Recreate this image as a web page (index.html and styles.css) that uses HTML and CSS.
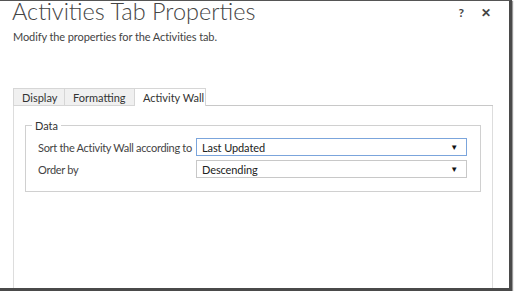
FILE: index.html
```html
<!DOCTYPE html>
<html lang="en">
  <head>
    <meta charset="UTF-8" />
    <meta name="viewport" content="width=device-width, initial-scale=1.0" />
    <title>Activities Tab Properties</title>
    <link rel="stylesheet" href="styles.css">
  </head>
  <body>
    <div class="dialog">
      <div class="header">
        <h1 class="title">Activities Tab Properties</h1>
        <div class="actions">
          <span class="help">?</span>
          <span class="close">&#x2715;</span>
        </div>
      </div>
      <p class="subtitle">Modify the properties for the Activities tab.</p>

      <div class="tabs">
        <div class="tab">Display</div>
        <div class="tab">Formatting</div>
        <div class="tab active">Activity Wall</div>
        <div class="tab-fill"></div>
      </div>

      <div class="panel">
        <fieldset class="group">
          <legend>Data</legend>
          <div class="form-grid">
            <label>Sort the Activity Wall according to</label>
            <div class="select focused">
              <span>Last Updated</span>
              <span class="arrow">&#9660;</span>
            </div>
            <label>Order by</label>
            <div class="select">
              <span>Descending</span>
              <span class="arrow">&#9660;</span>
            </div>
          </div>
        </fieldset>
      </div>
    </div>
  </body>
</html>
```

FILE: styles.css
```css
* {
  box-sizing: border-box;
}

body {
  margin: 0;
  background-color: #fff;
  font-family: Lato, "Open Sans", sans-serif;
  color: #333;
}

.dialog {
  width: 512px;
  height: 291px;
  border-top: 1px solid #555;
  border-right: 3px solid #4a4a4a;
  border-bottom: 3px solid #4a4a4a;
  box-shadow: 1px 1px 1px #999;
  background-color: #fff;
  display: flex;
  flex-direction: column;
  overflow: hidden;
}

.header {
  display: flex;
  align-items: flex-start;
  justify-content: space-between;
  padding: 0 18px 0 12px;
}

.title {
  margin: -5px 0 0 0;
  font-size: 23.5px;
  font-weight: 300;
  line-height: 30px;
  color: #444;
  white-space: nowrap;
}

.actions {
  display: flex;
  gap: 17px;
  padding-top: 4px;
  font-size: 12px;
  font-weight: 700;
  color: #444;
}

.subtitle {
  margin: 4px 0 0 13px;
  font-size: 11px;
  letter-spacing: -0.1px;
  color: #444;
}

/* Onglets */
.tabs {
  display: flex;
  margin: 45px 0 0 13px;
  width: 480px;
  height: 18px;
}

.tab {
  padding: 0 8px;
  font-size: 11px;
  line-height: 17px;
  color: #333;
  background-color: #f0f0f0;
  border: 1px solid #d6d6d6;
  border-right: none;
  white-space: nowrap;
}

.tab:first-child {
  width: 51px;
}

.tab:nth-child(2) {
  width: 70px;
}

.tab.active {
  width: 72px;
  background-color: #fff;
  border-right: 1px solid #d6d6d6;
  border-bottom: none;
}

.tab-fill {
  flex: 1;
  border-bottom: 1px solid #c8c8c8;
}

.panel {
  flex: 1;
  margin-left: 13px;
  width: 480px;
  border-left: 1px solid #ddd;
  border-right: 1px solid #ddd;
  padding: 13px 11px 0 11px;
}

.group {
  margin: 0;
  border: 1px solid #d0d0d0;
  padding: 6px 13px 13px 12px;
}

.group legend {
  margin-left: -6px;
  padding: 0 3px;
  font-size: 11px;
  color: #333;
}

.form-grid {
  display: grid;
  grid-template-columns: 158px 1fr;
  row-gap: 4px;
  align-items: center;
  font-size: 11px;
  letter-spacing: -0.1px;
}

.form-grid label {
  color: #444;
  white-space: nowrap;
  letter-spacing: -0.3px;
}

.select {
  display: flex;
  justify-content: space-between;
  align-items: center;
  height: 18px;
  padding: 0 8px 0 5px;
  border: 1px solid #c8c8c8;
  color: #222;
}

.select.focused {
  border-color: #7ba5dc;
}

.arrow {
  font-size: 8px;
  color: #111;
}
```
